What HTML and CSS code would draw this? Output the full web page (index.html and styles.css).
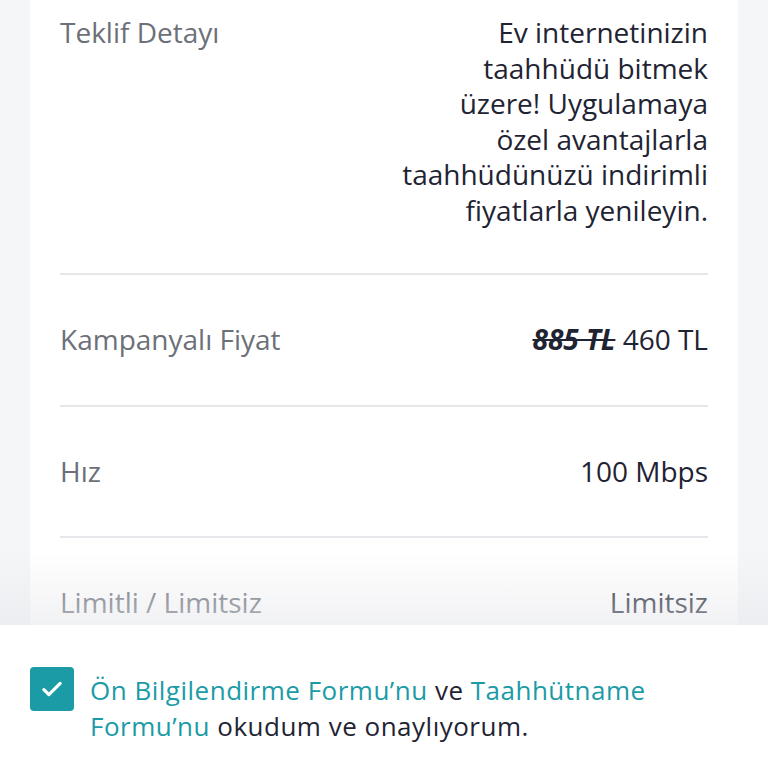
FILE: index.html
```html
<!DOCTYPE html>
<html lang="tr">
<head>
    <meta charset="UTF-8">
    <title>Teklif Detayı</title>
    <link rel="stylesheet" href="styles.css">
</head>
<body>

<div class="page">
    <div class="card">
        <div class="row first">
            <div class="label">Teklif Detayı</div>
            <div class="value">Ev internetinizin<br>taahhüdü bitmek<br>üzere! Uygulamaya<br>özel avantajlarla<br>taahhüdünüzü indirimli<br>fiyatlarla yenileyin.</div>
        </div>
        <div class="row">
            <div class="label">Kampanyalı Fiyat</div>
            <div class="value"><span class="old">885 TL</span> 460 TL</div>
        </div>
        <div class="row">
            <div class="label">Hız</div>
            <div class="value">100 Mbps</div>
        </div>
        <div class="row last">
            <div class="label">Limitli / Limitsiz</div>
            <div class="value">Limitsiz</div>
        </div>
    </div>
    <div class="fade"></div>
</div>

<div class="footer">
    <label class="agree">
        <span class="check">
            <svg width="30" height="30" viewBox="0 0 24 24"><path d="M5.5 12.5l4 4L18.5 7.5" fill="none" stroke="#fff" stroke-width="2.6" stroke-linecap="round" stroke-linejoin="round"/></svg>
        </span>
        <span class="agree_txt">
            <span class="line"><a class="link">Ön Bilgilendirme Formu’nu</a> ve <a class="link">Taahhütname</a></span>
            <span class="line"><a class="link">Formu’nu</a> okudum ve onaylıyorum.</span>
        </span>
    </label>
</div>

</body>
</html>
```

FILE: styles.css
```css
html, body {
    margin: 0;
    padding: 0;
}

body {
    width: 768px;
    height: 768px;
    overflow: hidden;
    background-color: #f5f6f8;
    font-family: "Open Sans", Lato, sans-serif;
    font-size: 28px;
    color: #1f2433;
}

.page {
    position: relative;
    height: 625px;
    overflow: hidden;
    padding: 0 30px;
}

.card {
    background-color: #fff;
    padding: 0 30px;
}

.row {
    display: flex;
    justify-content: space-between;
    align-items: flex-start;
    padding: 47px 0 47px;
    border-bottom: 2px solid #e6e7ea;
    line-height: 35.5px;
}

.row.first {
    padding-top: 15px;
    padding-bottom: 45px;
}

.row.last {
    border-bottom: none;
}

.label {
    color: #6c7078;
    white-space: nowrap;
}

.value {
    text-align: right;
    white-space: nowrap;
}

.old {
    font-style: italic;
    font-weight: bold;
    text-decoration: line-through;
}

.fade {
    position: absolute;
    left: 0;
    right: 0;
    bottom: 0;
    height: 75px;
    background: linear-gradient(to bottom, rgba(235, 236, 240, 0), rgba(230, 231, 235, 0.55));
}

.footer {
    background-color: #fff;
    height: 143px;
    padding: 42px 30px 0;
    box-sizing: border-box;
}

.agree {
    display: flex;
    align-items: flex-start;
}

.check {
    flex: none;
    width: 44px;
    height: 44px;
    border-radius: 4px;
    background-color: #1b9ba6;
    display: flex;
    align-items: center;
    justify-content: center;
    margin-right: 16px;
}

.agree_txt {
    display: flex;
    flex-direction: column;
    margin-top: 6px;
    color: #1f2433;
    white-space: nowrap;
    font-size: 26px;
    letter-spacing: 0.5px;
}

.line {
    display: block;
    line-height: 35.5px;
}

.link {
    color: #1b9ba6;
}
```
